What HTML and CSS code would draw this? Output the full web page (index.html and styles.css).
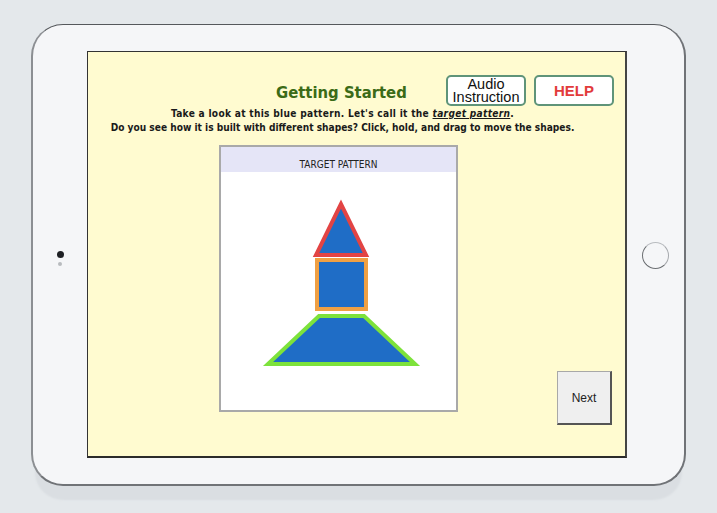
FILE: index.html
```html
<!DOCTYPE html>
<html>
<head>
<meta charset="utf-8">
<link rel="stylesheet" href="styles.css">
</head>
<body>
<div class="stage">
  <div class="tablet">
    <div class="bezel bezel-left">
      <span class="camera"></span>
      <span class="sensor"></span>
    </div>
    <div class="screen">
      <div class="header">
        <h1 class="title">Getting Started</h1>
        <div class="actions">
          <button class="btn btn-audio"><span class="line">Audio</span><span class="line">Instruction</span></button>
          <button class="btn btn-help">HELP</button>
        </div>
      </div>
      <p class="instructions"><span class="first">Take a look at this blue pattern. Let's call it the <em class="term">target pattern</em>.</span><br>Do you see how it is built with different shapes? Click, hold, and drag to move the shapes.</p>
      <div class="work">
        <div class="panel">
          <div class="panel-head">TARGET PATTERN</div>
          <div class="panel-body">
            <svg class="pattern" width="235" height="238" viewBox="0 0 235 238">
              <polygon points="120,32 95,83 145,83" fill="#1f6dc6" stroke="#e24444" stroke-width="4" stroke-linejoin="miter"/>
              <rect x="96" y="88" width="49" height="49" fill="#1f6dc6" stroke="#f0a043" stroke-width="4"/>
              <polygon points="98,144 143,144 194,192 47,192" fill="#1f6dc6" stroke="#7de23b" stroke-width="4" stroke-linejoin="miter"/>
            </svg>
          </div>
        </div>
        <button class="next">Next</button>
      </div>
    </div>
    <div class="bezel bezel-right">
      <span class="home"></span>
    </div>
  </div>
</div>
</body>
</html>
```
FILE: styles.css
```css
html, body {
  margin: 0;
  padding: 0;
}
body {
  background: #e4e8eb;
  width: 717px;
  height: 513px;
  overflow: hidden;
  font-family: "DejaVu Sans Condensed", "DejaVu Sans", sans-serif;
}
.stage {
  padding: 24px 0 0 31px;
}
.tablet {
  width: 651px;
  height: 459px;
  background: #f5f6f8;
  border: 1px solid #8c8f93;
  border-left: 2px solid #8c8f93;
  border-right: 2px solid #707377;
  border-top-color: #55585c;
  border-bottom: 2px solid #707377;
  border-radius: 32px;
  display: flex;
  box-shadow: 0 18px 2px -4px #dadee2;
}
.bezel {
  display: flex;
  flex-direction: column;
  align-items: center;
  justify-content: center;
}
.bezel-left {
  width: 54px;
  gap: 4px;
  padding-top: 8px;
  box-sizing: border-box;
}
.camera {
  width: 7px;
  height: 7px;
  border-radius: 50%;
  background: #1e2024;
}
.sensor {
  width: 4px;
  height: 4px;
  border-radius: 50%;
  background: #b8bbbf;
}
.bezel-right {
  width: 56px;
  padding-top: 2px;
  box-sizing: border-box;
}
.home {
  width: 25px;
  height: 25px;
  border-radius: 50%;
  border: 1.5px solid #6c6f73;
  border-top-color: #b9bcc0;
  border-right-color: #a6a9ad;
}
.screen {
  margin-top: 26px;
  width: 537px;
  height: 404px;
  background: #fffbd0;
  border: 1px solid #333;
  border-bottom: 2px solid #2b2b2b;
  border-right: 2px solid #444;
  display: flex;
  flex-direction: column;
}
.header {
  display: flex;
  align-items: flex-start;
  padding-top: 23px;
  padding-right: 11px;
}
.title {
  margin: 6px 0 0 188px;
  font-size: 16.5px;
  font-weight: bold;
  color: #3b6b17;
  line-height: 24px;
}
.actions {
  margin-left: auto;
  display: flex;
  gap: 8px;
}
.btn {
  width: 80px;
  height: 31px;
  background: #fff;
  border: 2px solid #5f9479;
  border-radius: 5px;
  padding: 0;
  font-family: "Liberation Sans", Arial, sans-serif;
  cursor: pointer;
}
.btn-audio {
  display: flex;
  flex-direction: column;
  align-items: center;
  justify-content: center;
  font-size: 14.5px;
  line-height: 13px;
  color: #111;
  padding-top: 1px;
}
.line {
  display: block;
  height: 13px;
}
.btn-help {
  font-size: 15px;
  font-weight: bold;
  color: #e23b3b;
}
.instructions {
  margin: 1px 28px 0 0;
  text-align: center;
  font-size: 10.1px;
  font-weight: bold;
  line-height: 14px;
  color: #1a1a1a;
}
.first {
  letter-spacing: 0.3px;
}
.term {
  text-decoration: underline;
}
.work {
  display: flex;
  align-items: flex-end;
  margin-top: 10px;
  padding-right: 13px;
}
.panel {
  margin-left: 131px;
  width: 235px;
  height: 263px;
  border: 2px solid #a9a9a9;
  background: #fff;
  display: flex;
  flex-direction: column;
}
.panel-head {
  height: 25px;
  background: #e5e5f7;
  font-size: 10px;
  color: #222;
  text-align: center;
  line-height: 12px;
  padding-top: 12px;
  box-sizing: border-box;
}
.panel-body {
  flex: 1;
}
.pattern {
  display: block;
}
.next {
  margin-left: auto;
  margin-bottom: -13px;
  width: 55px;
  height: 54px;
  background: #efefef;
  border: 1px solid #a8a8a8;
  border-right: 2px solid #555;
  border-bottom: 2px solid #555;
  font-family: "Liberation Sans", Arial, sans-serif;
  font-size: 12px;
  color: #222;
  padding: 0;
  cursor: pointer;
}
```
